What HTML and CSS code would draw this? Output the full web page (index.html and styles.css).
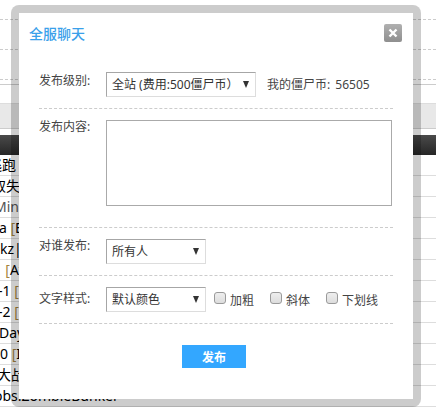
FILE: index.html
```html
<!DOCTYPE html>
<html lang="zh-CN">

<head>
	<meta charset="UTF-8">
	<title>全服聊天</title>
	<link rel="stylesheet" href="styles.css">
</head>

<body>
	<!-- Page behind the dialog -->
	<div class="page">
		<div class="dash-line"></div>
		<div class="dash-line"></div>
		<div class="dash-line"></div>
		<div class="solid-line"></div>
		<div class="band"></div>
		<div class="table-head"></div>
		<div class="table-row shift-12">逃跑</div>
		<div class="table-row shift-8">取失败</div>
		<div class="table-row muted shift-6">Mini</div>
		<div class="table-row shift-1">a <span class="tag">[</span>E</div>
		<div class="table-row">kz|</div>
		<div class="table-row shift-2">&nbsp;&nbsp;<span class="tag">[</span>At</div>
		<div class="table-row shift-2">-1 <span class="tag">[</span></div>
		<div class="table-row shift-2">-2 <span class="tag">[</span></div>
		<div class="table-row shift-1">Day</div>
		<div class="table-row">0 <span class="tag">[</span>I</div>
		<div class="table-row shift-3">大战</div>
		<div class="table-row shift-6">obs.ZombieBunker</div>
	</div>

	<!-- Dialog -->
	<div class="modal">
		<div class="modal-head">
			<h3 class="modal-title">全服聊天</h3>
			<button class="close-btn" type="button" aria-label="关闭">
				<svg width="10" height="10" viewBox="0 0 10 10">
					<path d="M1.5 1.5 L8.5 8.5 M8.5 1.5 L1.5 8.5" stroke="#fff" stroke-width="2.4" fill="none" />
				</svg>
			</button>
		</div>

		<form class="form">
			<div class="form-row row-level">
				<label class="form-label">发布级别:</label>
				<div class="select select-wide">
					<select>
						<option>全站 (费用:500僵尸币）</option>
					</select>
				</div>
				<span class="balance">我的僵尸币: 56505</span>
			</div>

			<div class="form-row row-content">
				<label class="form-label">发布内容:</label>
				<textarea class="content-box"></textarea>
			</div>

			<div class="form-row row-target">
				<label class="form-label">对谁发布:</label>
				<div class="select">
					<select>
						<option>所有人</option>
					</select>
				</div>
			</div>

			<div class="form-row row-style">
				<label class="form-label">文字样式:</label>
				<div class="select">
					<select>
						<option>默认颜色</option>
					</select>
				</div>
				<label class="check"><input type="checkbox">加粗</label>
				<label class="check"><input type="checkbox">斜体</label>
				<label class="check"><input type="checkbox">下划线</label>
			</div>

			<div class="form-actions">
				<button class="submit-btn" type="submit">发布</button>
			</div>
		</form>
	</div>
</body>

</html>
```

FILE: styles.css
```css
* {
	box-sizing: border-box;
}

html,
body {
	height: 100%;
}

body {
	margin: 0;
	overflow: hidden;
	background-color: #fff;
	color: #333;
	font-family: "Noto Sans", "Noto Sans CJK SC", sans-serif;
	font-size: 12px;
}

/* Page behind the dialog */
.page {
	padding-top: 19px;
}

.dash-line {
	height: 30px;
	border-top: 1px dashed #ccc;
}

.solid-line {
	height: 19px;
	margin-top: -25px;
	border-top: 1px solid #ccc;
}

.band {
	height: 26px;
	background-color: #e8e8e8;
	border-top: 1px solid #ddd;
	border-bottom: 1px solid #ccc;
}

.table-head {
	height: 20px;
	margin-top: 6px;
	background: linear-gradient(#4a4a4a, #262626);
}

.table-row {
	height: 21px;
	overflow: hidden;
	border-bottom: 1px solid #ddd;
	color: #000;
	font-size: 14px;
	line-height: 19px;
	white-space: nowrap;
}

.shift-1 {
	text-indent: -1px;
}

.shift-2 {
	text-indent: -2px;
}

.shift-3 {
	text-indent: -3px;
}

.shift-6 {
	text-indent: -6px;
}

.shift-8 {
	text-indent: -8px;
}

.shift-12 {
	text-indent: -12px;
}

.muted {
	color: #555;
}

.tag {
	color: #a5843c;
}

/* Dialog */
.modal {
	position: absolute;
	top: 5px;
	left: 11px;
	width: 410px;
	height: 402px;
	background-color: #fff;
	background-clip: padding-box;
	border: 8px solid rgba(0, 0, 0, 0.2);
	border-radius: 8px;
}

.modal-head {
	display: flex;
	justify-content: space-between;
	align-items: center;
	height: 18px;
	margin: 11px 11px 0 10px;
}

.modal-title {
	margin: 0;
	color: #3aa0ea;
	font-size: 14px;
	font-weight: 500;
}

.close-btn {
	display: flex;
	justify-content: center;
	align-items: center;
	width: 18px;
	height: 18px;
	padding: 0;
	border: none;
	border-radius: 2px;
	background: linear-gradient(#b0b0b0, #8f8f8f);
}

.form {
	margin: 30px 20px 0 20px;
}

.form-row {
	display: flex;
	align-items: flex-start;
	border-bottom: 1px dashed #ccc;
}

.row-level {
	height: 37px;
}

.row-content {
	height: 119px;
	padding-top: 11px;
}

.row-target {
	height: 48px;
	padding-top: 11px;
}

.row-style {
	height: 48px;
	padding-top: 11px;
}

.form-label {
	flex: none;
	width: 67px;
	color: #444;
	line-height: 14px;
}

.row-level .form-label {
	padding-top: 2px;
}

.row-style .form-label {
	padding-top: 5px;
}

.select {
	position: relative;
	flex: none;
	width: 100px;
	height: 25px;
}

.select-wide {
	width: 150px;
}

.select::after {
	content: "";
	position: absolute;
	top: 9px;
	right: 7px;
	border-top: 7px solid #333;
	border-left: 3.5px solid transparent;
	border-right: 3.5px solid transparent;
	pointer-events: none;
}

.select select {
	width: 100%;
	height: 100%;
	padding: 0 0 0 5px;
	appearance: none;
	border: 1px solid #ddd;
	border-top-color: #a6a6a6;
	border-left-color: #a6a6a6;
	border-radius: 0;
	background-color: #fff;
	color: #333;
	font-family: inherit;
	font-size: 12px;
}

.balance {
	margin-left: 11px;
	color: #444;
	line-height: 25px;
	word-spacing: 2px;
}

.content-box {
	display: block;
	width: 286px;
	height: 86px;
	border: 1px solid #aaa;
	resize: none;
}

.check {
	display: flex;
	align-items: center;
	gap: 4px;
	height: 26px;
	margin-left: 8px;
	color: #444;
}

.check + .check {
	margin-left: 16px;
}

.check input {
	appearance: none;
	width: 12px;
	height: 12px;
	margin: 0 0 5px 0;
	border: 1px solid #9a9a9a;
	border-radius: 3px;
	background: linear-gradient(#eee, #ddd);
}

.form-actions {
	display: flex;
	justify-content: center;
	padding: 21px 4px 0 0;
}

.submit-btn {
	width: 64px;
	height: 23px;
	padding: 0;
	border: none;
	background-color: #33a7ff;
	color: #fff;
	font-family: inherit;
	font-size: 12px;
	font-weight: bold;
}
```
